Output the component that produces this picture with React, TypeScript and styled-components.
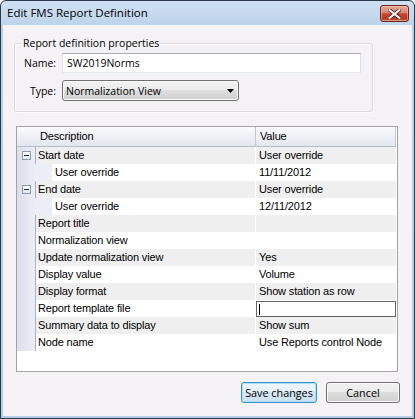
import React from "react";
import styled, { createGlobalStyle } from "styled-components";

const GlobalStyle = createGlobalStyle`
  html, body { margin: 0; padding: 0; background: #ffffff; }
  * { box-sizing: border-box; }
`;

const UI_FONT = `"Open Sans", "Noto Sans", sans-serif`;
const GRID_FONT = `"Liberation Sans", Arial, sans-serif`;

const Window = styled.div`
  width: 415px;
  height: 419px;
  display: flex;
  flex-direction: column;
  border: 1px solid #2c3846;
  border-radius: 6px 6px 0 0;
  background: linear-gradient(#cfdff1, #b9d1ea 30px, #b3cde8);
  overflow: hidden;
`;

const TitleBar = styled.div`
  height: 24px;
  flex: none;
  display: flex;
  justify-content: space-between;
  align-items: flex-start;
  padding: 0 5px 0 6px;
`;

const Title = styled.span`
  font-family: ${UI_FONT};
  font-size: 11.5px;
  line-height: 24px;
  color: #000;
`;

const CloseButton = styled.div`
  margin-top: 4px;
  width: 29px;
  height: 17px;
  border: 1px solid #6a261c;
  border-radius: 3px;
  background: linear-gradient(#e9a897 0%, #da8470 45%, #c6452c 52%, #b93b23 85%, #d2684c 100%);
  box-shadow: inset 0 0 0 1px rgba(255, 210, 195, 0.45);
  display: flex;
  align-items: center;
  justify-content: center;
`;

const Client = styled.div`
  flex: 1;
  margin: 0 2px 2px 2px;
  background: #f5f2f6;
  display: flex;
  flex-direction: column;
`;

const GroupBox = styled.div`
  position: relative;
  margin: 18px 39px 0 11px;
  border: 1px solid #d9d9de;
  border-radius: 3px;
  box-shadow: inset 1px 1px 0 #ffffff, 1px 1px 0 #ffffff;
  padding: 9px 0 10px 9px;
  display: grid;
  grid-template-columns: 32px auto;
  column-gap: 6px;
  row-gap: 7px;
  align-items: center;
  justify-content: start;
`;

const Legend = styled.span`
  position: absolute;
  top: -9px;
  left: 7px;
  padding: 0 1px;
  background: #f5f2f6;
  font-family: ${UI_FONT};
  font-size: 10.5px;
  line-height: 16px;
  color: #000;
`;

const FieldLabel = styled.span`
  font-family: ${UI_FONT};
  font-size: 10.5px;
  color: #000;
  text-align: right;
`;

const TextInput = styled.div`
  width: 299px;
  height: 20px;
  background: #fff;
  border: 1px solid #dbdfe6;
  border-top-color: #abadb3;
  border-bottom-color: #e3e9ef;
  padding-left: 4px;
  font-family: ${UI_FONT};
  font-size: 10.5px;
  line-height: 18px;
  color: #000;
`;

const SelectBox = styled.div`
  width: 177px;
  height: 21px;
  border: 1px solid #707070;
  border-radius: 3px;
  background: linear-gradient(#f2f2f2 0%, #ebebeb 50%, #dddddd 50%, #cfcfcf 100%);
  box-shadow: inset 0 0 0 1px #fbfbfb;
  display: flex;
  align-items: center;
  justify-content: space-between;
  padding: 0 4px 0 3px;
  font-family: ${UI_FONT};
  font-size: 10.5px;
  color: #000;
`;

const Table = styled.div`
  margin: 14px 0 0 13px;
  width: 382px;
  height: 246px;
  border: 1px solid #a3a3a3;
  background: #fff;
  display: flex;
  flex-direction: column;
  font-family: ${GRID_FONT};
  font-size: 11px;
  letter-spacing: -0.15px;
  color: #000;
`;

const HeaderRow = styled.div`
  display: flex;
  height: 20px;
  width: 379px;
  background: linear-gradient(#fafbfd, #e2e6ee);
  border-bottom: 1px solid #b6bdcc;
`;

const HeaderCell = styled.div<{ $w: number; $pad: number }>`
  width: ${(p) => p.$w}px;
  padding-left: ${(p) => p.$pad}px;
  border-right: 1px solid #c2c8d6;
  line-height: 19px;
`;

const Row = styled.div`
  display: flex;
  height: 17px;
  width: 379px;
`;

const Gutter = styled.div<{ $line: boolean }>`
  width: 19px;
  flex: none;
  background: linear-gradient(to right, #dcdeec, #eceef7);
  border-right: ${(p) => (p.$line ? "1px solid #a9b1c8" : "none")};
  display: flex;
  align-items: center;
  padding-left: 5px;
`;

const Indent = styled.div`
  width: 16px;
  flex: none;
  background: #eceef7;
`;

const Cell = styled.div<{ $w: number; $stripe: boolean; $pad: number }>`
  width: ${(p) => p.$w}px;
  flex: none;
  background: ${(p) => (p.$stripe ? "#efefef" : "#ffffff")};
  padding-left: ${(p) => p.$pad}px;
  line-height: 17px;
  white-space: nowrap;
  overflow: hidden;
`;

const ValueCell = styled(Cell)`
  margin-left: 1px;
`;

const EditBox = styled.div`
  width: 140px;
  height: 16px;
  margin-left: 1px;
  margin-top: 1px;
  border: 1px solid #646464;
  background: #fff;
  display: flex;
  align-items: center;
  padding-left: 2px;
`;

const Caret = styled.div`
  width: 1px;
  height: 11px;
  background: #000;
`;

const ExpandBox = styled.div`
  width: 9px;
  height: 9px;
  border: 1px solid #8e9bb0;
  background: linear-gradient(#ffffff, #dfe3ec);
  display: flex;
  align-items: center;
  justify-content: center;
  &::after {
    content: "";
    width: 5px;
    height: 1px;
    background: #1c2a3c;
  }
`;

const ButtonRow = styled.div`
  margin-top: 10px;
  display: flex;
  justify-content: flex-end;
  gap: 9px;
  padding-right: 12px;
`;

const Button = styled.div<{ $w: number; $focused?: boolean }>`
  width: ${(p) => p.$w}px;
  height: 21px;
  border-radius: 3px;
  border: 1px solid ${(p) => (p.$focused ? "#3c8fc8" : "#707070")};
  box-shadow: inset 0 0 0 1px ${(p) => (p.$focused ? "#a8e2fa" : "#fbfbfb")};
  background: ${(p) =>
    p.$focused
      ? "linear-gradient(#eef6fb 0%, #e5f0f8 50%, #d6e7f3 50%, #cbe0ef 100%)"
      : "linear-gradient(#f2f2f2 0%, #ebebeb 50%, #dddddd 50%, #cfcfcf 100%)"};
  display: flex;
  align-items: center;
  justify-content: center;
  font-family: ${UI_FONT};
  font-size: 10.8px;
  color: #000;
`;

type RowData = {
  label: string;
  value: string;
  kind?: "parent" | "child";
  editing?: boolean;
};

const rows: RowData[] = [
  { label: "Start date", value: "User override", kind: "parent" },
  { label: "User override", value: "11/11/2012", kind: "child" },
  { label: "End date", value: "User override", kind: "parent" },
  { label: "User override", value: "12/11/2012", kind: "child" },
  { label: "Report title", value: "" },
  { label: "Normalization view", value: "" },
  { label: "Update normalization view", value: "Yes" },
  { label: "Display value", value: "Volume" },
  { label: "Display format", value: "Show station as row" },
  { label: "Report template file", value: "", editing: true },
  { label: "Summary data to display", value: "Show sum" },
  { label: "Node name", value: "Use Reports control Node" },
];

const CloseGlyph = () => (
  <svg width="13" height="10" viewBox="0 0 13 10">
    <path
      d="M1.5 1 L11.5 9 M11.5 1 L1.5 9"
      stroke="#4a1a14"
      strokeWidth="3.6"
      strokeLinecap="square"
    />
    <path
      d="M1.5 1 L11.5 9 M11.5 1 L1.5 9"
      stroke="#ffffff"
      strokeWidth="2"
      strokeLinecap="square"
    />
  </svg>
);

const DropArrow = () => (
  <svg width="7" height="4" viewBox="0 0 7 4">
    <path d="M0 0 H7 L3.5 4 Z" fill="#000" />
  </svg>
);

export default function App() {
  return (
    <>
      <GlobalStyle />
      <Window>
        <TitleBar>
          <Title>Edit FMS Report Definition</Title>
          <CloseButton>
            <CloseGlyph />
          </CloseButton>
        </TitleBar>
        <Client>
          <GroupBox>
            <Legend>Report definition properties</Legend>
            <FieldLabel>Name:</FieldLabel>
            <TextInput>SW2019Norms</TextInput>
            <FieldLabel>Type:</FieldLabel>
            <SelectBox>
              <span>Normalization View</span>
              <DropArrow />
            </SelectBox>
          </GroupBox>
          <Table>
            <HeaderRow>
              <HeaderCell $w={239} $pad={23}>
                Description
              </HeaderCell>
              <HeaderCell $w={140} $pad={4}>
                Value
              </HeaderCell>
            </HeaderRow>
            {rows.map((r, i) => {
              const stripe = i % 2 === 0;
              const child = r.kind === "child";
              return (
                <Row key={i}>
                  <Gutter $line={!child}>
                    {r.kind === "parent" && <ExpandBox />}
                  </Gutter>
                  {child && <Indent />}
                  <Cell $w={child ? 203 : 219} $stripe={stripe} $pad={child ? 3 : 2}>
                    {r.label}
                  </Cell>
                  {r.editing ? (
                    <EditBox>
                      <Caret />
                    </EditBox>
                  ) : (
                    <ValueCell $w={140} $stripe={stripe} $pad={3}>
                      {r.value}
                    </ValueCell>
                  )}
                </Row>
              );
            })}
          </Table>
          <ButtonRow>
            <Button $w={76} $focused>
              Save changes
            </Button>
            <Button $w={74}>Cancel</Button>
          </ButtonRow>
        </Client>
      </Window>
    </>
  );
}
